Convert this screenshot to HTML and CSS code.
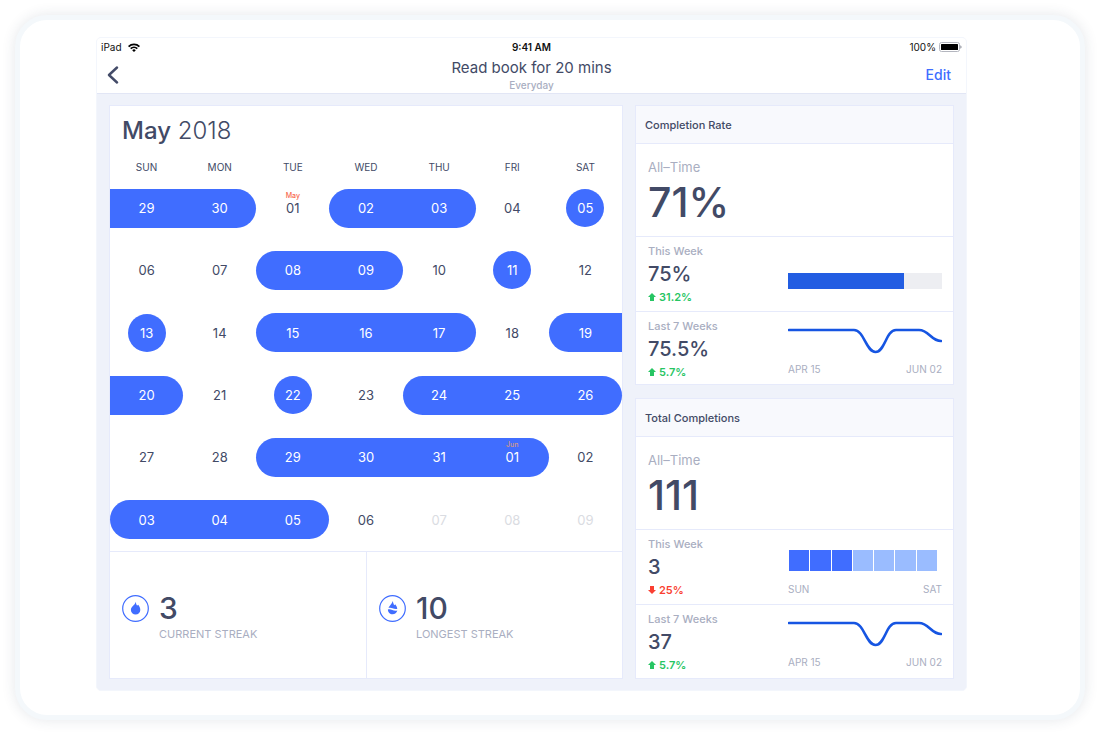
FILE: index.html
```html
<!DOCTYPE html>
<html lang="en">
<head>
<meta charset="utf-8">
<meta name="viewport" content="width=device-width, initial-scale=1">
<title>Read book for 20 mins</title>
<link rel="stylesheet" href="styles.css">
</head>
<body>
<div class="device">
  <div class="screen">
    <header class="topbar">
      <div class="status">
        <div class="status-left">
          <span>iPad</span>
          <svg class="wifi" viewBox="0 0 12 9" width="12" height="9" aria-hidden="true"><path d="M0 3A8.6 8.6 0 0 1 12 3L10.8 4.2A6.9 6.9 0 0 0 1.2 4.2ZM2.1 5.1A5.6 5.6 0 0 1 9.900 5.100L8.700 6.300A3.900 3.900 0 0 0 3.300 6.300ZM4.200 7.200A2.600 2.600 0 0 1 7.800 7.200L6 9Z"/></svg>
        </div>
        <span class="clock">9:41 AM</span>
        <div class="status-right">
          <span>100%</span>
          <svg viewBox="0 0 23 10" width="23" height="10" aria-hidden="true"><rect x=".5" y=".5" width="20" height="9" rx="2" fill="#fff" stroke="#b4b6bf"/><rect x="2" y="2" width="17" height="6" rx=".5"/><path d="M21.300 3.300Q22.600 4 22.600 5T21.300 6.700Z" fill="#8d909c"/></svg>
        </div>
      </div>
      <div class="nav">
        <button class="back" type="button" aria-label="Back"><svg viewBox="0 0 12 18" width="12" height="18" aria-hidden="true"><path d="M10 1.500 2 9l8 7.500" fill="none" stroke="#434b68" stroke-width="2.400" stroke-linecap="round" stroke-linejoin="round"/></svg></button>
        <div class="heading">
          <h1>Read book for 20 mins</h1>
          <p>Everyday</p>
        </div>
        <button class="edit" type="button">Edit</button>
      </div>
    </header>
    <main class="content">
      <section class="panel calendar">
        <h2 class="month"><strong>May</strong> 2018</h2>
        <table class="days">
          <thead><tr><th scope="col">SUN</th><th scope="col">MON</th><th scope="col">TUE</th><th scope="col">WED</th><th scope="col">THU</th><th scope="col">FRI</th><th scope="col">SAT</th></tr></thead>
          <tbody>
            <tr><td><span class="run">29</span></td><td><span class="run end">30</span></td><td><span class="day">01<small>May</small></span></td><td><span class="run start">02</span></td><td><span class="run end">03</span></td><td><span class="day">04</span></td><td><span class="dot">05</span></td></tr>
            <tr><td><span class="day">06</span></td><td><span class="day">07</span></td><td><span class="run start">08</span></td><td><span class="run end">09</span></td><td><span class="day">10</span></td><td><span class="dot">11</span></td><td><span class="day">12</span></td></tr>
            <tr><td><span class="dot">13</span></td><td><span class="day">14</span></td><td><span class="run start">15</span></td><td><span class="run">16</span></td><td><span class="run end">17</span></td><td><span class="day">18</span></td><td><span class="run start">19</span></td></tr>
            <tr><td><span class="run end">20</span></td><td><span class="day">21</span></td><td><span class="dot">22</span></td><td><span class="day">23</span></td><td><span class="run start">24</span></td><td><span class="run">25</span></td><td><span class="run end">26</span></td></tr>
            <tr><td><span class="day">27</span></td><td><span class="day">28</span></td><td><span class="run start">29</span></td><td><span class="run">30</span></td><td><span class="run">31</span></td><td><span class="run end">01<small>Jun</small></span></td><td><span class="day">02</span></td></tr>
            <tr><td><span class="run start">03</span></td><td><span class="run">04</span></td><td><span class="run end">05</span></td><td><span class="day">06</span></td><td><span class="day future">07</span></td><td><span class="day future">08</span></td><td><span class="day future">09</span></td></tr>
          </tbody>
        </table>
        <div class="streaks">
          <div class="streak">
            <svg viewBox="0 0 27 27" width="27" height="27" aria-hidden="true"><circle cx="13.500" cy="13.500" r="12.800" fill="#fff" stroke="#406dff" stroke-width="1.200"/><path d="M13.800 6.800c.2 1.700.6 2.700 1.200 3.800.6-.1.900-.4 1.200-.9 1.300 1.600 2.100 3.300 2.100 5.200a4.700 4.700 0 0 1-9.400 0c0-3.200 3.900-4.400 4.900-8.100z" fill="#406dff"/></svg>
            <div><p class="streak-value">3</p><p class="streak-label">CURRENT STREAK</p></div>
          </div>
          <div class="streak">
            <svg viewBox="0 0 27 27" width="27" height="27" aria-hidden="true"><circle cx="13.500" cy="13.500" r="12.800" fill="#fff" stroke="#406dff" stroke-width="1.200"/><path d="M13.800 6c.3 1.900.8 3 1.400 4.200.5-.2.800-.5 1-1 1.200 1.500 2 3 2.100 4.600-1.800.6-3.300-.1-4.800-.6-1.500-.5-2.700-.7-4-.2.600-2.300 3.200-3.500 4.300-7z" fill="#406dff"/><path d="M8.900 14.500c1.600-.6 2.900-.1 4.400.4 1.600.6 3.200 1 5 .5-.5 2.300-2.400 3.900-4.800 3.900-2.500 0-4.600-2.100-4.600-4.800z" fill="#406dff"/></svg>
            <div><p class="streak-value">10</p><p class="streak-label">LONGEST STREAK</p></div>
          </div>
        </div>
      </section>
      <div class="side">
        <section class="panel">
          <h2 class="panel-title">Completion Rate</h2>
          <div class="total"><p class="total-label">All–Time</p><p class="total-value">71%</p></div>
          <div class="metric">
            <div><p class="metric-label">This Week</p><p class="metric-value">75%</p><p class="delta up"><svg viewBox="0 0 8 8" width="8" height="8" aria-hidden="true"><path d="M4 0 8 4H6v4H2V4H0Z"/></svg>31.2%</p></div>
            <div class="chart chart-bar"><div class="bar"><div class="bar-fill" style="width:75%"></div></div></div>
          </div>
          <div class="metric last">
            <div><p class="metric-label">Last 7 Weeks</p><p class="metric-value">75.5%</p><p class="delta up"><svg viewBox="0 0 8 8" width="8" height="8" aria-hidden="true"><path d="M4 0 8 4H6v4H2V4H0Z"/></svg>5.7%</p></div>
            <div class="chart"><svg class="line" viewBox="0 0 154 26" aria-hidden="true"><path d="M1 2H66C76 2 78 24 87.500 24S98 2 108 2H131C141 2 143 13 153 13"/></svg><div class="axis"><span>APR 15</span><span>JUN 02</span></div></div>
          </div>
        </section>
        <section class="panel">
          <h2 class="panel-title">Total Completions</h2>
          <div class="total"><p class="total-label">All–Time</p><p class="total-value">111</p></div>
          <div class="metric">
            <div><p class="metric-label">This Week</p><p class="metric-value">3</p><p class="delta down"><svg viewBox="0 0 8 8" width="8" height="8" aria-hidden="true"><path d="M4 8 0 4H2V0H6V4H8Z"/></svg>25%</p></div>
            <div class="chart"><div class="week"><i class="on"></i><i class="on"></i><i class="on"></i><i></i><i></i><i></i><i></i></div><div class="axis"><span>SUN</span><span>SAT</span></div></div>
          </div>
          <div class="metric last">
            <div><p class="metric-label">Last 7 Weeks</p><p class="metric-value">37</p><p class="delta up"><svg viewBox="0 0 8 8" width="8" height="8" aria-hidden="true"><path d="M4 0 8 4H6v4H2V4H0Z"/></svg>5.7%</p></div>
            <div class="chart"><svg class="line" viewBox="0 0 154 26" aria-hidden="true"><path d="M1 2H66C76 2 78 24 87.500 24S98 2 108 2H131C141 2 143 13 153 13"/></svg><div class="axis"><span>APR 15</span><span>JUN 02</span></div></div>
          </div>
        </section>
      </div>
    </main>
  </div>
</div>
</body>
</html>
```
FILE: styles.css
```css
* { box-sizing: border-box; }
body {
  margin: 0;
  min-height: 100vh;
  padding: 15px 15px 16px;
  display: flex;
  background: #fff;
  color: #424a66;
  font-family: Inter, "Liberation Sans", sans-serif;
}
h1, h2, p { margin: 0; font-weight: 400; }
button { border: 0; padding: 0; background: none; font: inherit; }

.device {
  flex: 1;
  display: flex;
  padding: 17px 113px 24px 76px;
  border: 5px solid #f4f8fb;
  border-radius: 32px;
  background: #fff;
  box-shadow: 0 0 14px rgba(40, 60, 80, .12);
}
.screen {
  flex: 1;
  display: flex;
  flex-direction: column;
  border: 1px solid #f3f6fc;
  border-radius: 5px;
  background: #eff2fa;
}

.topbar { background: #fff; border-bottom: 1px solid #e2e6f5; border-radius: 4px 4px 0 0; }
.status {
  display: grid;
  grid-template-columns: 1fr auto 1fr;
  align-items: center;
  height: 18px;
  padding: 0 4px;
  font-size: 10px;
  color: #111;
}
.status-left { display: flex; align-items: center; gap: 6px; }
.status-right { display: flex; align-items: center; justify-content: flex-end; gap: 3px; }
.clock { font-weight: 600; }
.nav {
  display: grid;
  grid-template-columns: 1fr auto 1fr;
  align-items: center;
  height: 37px;
  padding: 0 10px;
}
.back { justify-self: start; display: flex; }
.edit { justify-self: end; padding-right: 5px; font-size: 14px; font-weight: 500; line-height: 20px; color: #406dff; }
.heading { text-align: center; }
.heading h1 { font-size: 15px; font-weight: 400; line-height: 20px; }
.heading p { font-size: 10px; font-weight: 500; line-height: 14px; color: #a9aec1; }

.content {
  flex: 1;
  display: grid;
  grid-template-columns: 514fr 319fr;
  gap: 12px;
  padding: 11px 12px;
}
.panel { background: #fff; border: 1px solid #e6eafb; }

.calendar { display: flex; flex-direction: column; }
.month { padding: 9px 12px 0; font-size: 24px; font-weight: 300; line-height: 32px; }
.month strong { font-weight: 500; }
.days {
  width: 100%;
  flex: 1;
  height: 404px;
  border-collapse: collapse;
  table-layout: fixed;
  text-align: center;
}
.days th { height: 30px; padding: 10px 0 0; font-size: 10px; font-weight: 400; line-height: 20px; vertical-align: top; }
.days td { padding: 0; font-size: 13px; }
.day, .run, .dot { display: flex; align-items: center; justify-content: center; position: relative; height: 39px; }
.run, .dot { background: #406dff; color: #fff; }
.start { border-top-left-radius: 20px; border-bottom-left-radius: 20px; }
.end { border-top-right-radius: 20px; border-bottom-right-radius: 20px; }
.dot { width: 38px; height: 38px; margin: 0 auto; border-radius: 50%; }
.future { color: #dadce2; }
.days small { position: absolute; top: 2px; left: 0; right: 0; font-size: 7px; font-weight: 500; line-height: 10px; color: #f8694d; }
.run small { color: #d39a85; }

.streaks { display: grid; grid-template-columns: 1fr 1fr; border-top: 1px solid #e6eafb; }
.streak { display: flex; gap: 10px; padding: 38px 12px 36px; }
.streak + .streak { border-left: 1px solid #e6eafb; }
.streak svg { margin-top: 5px; }
.streak-value { font-size: 30px; font-weight: 500; line-height: 36px; }
.streak-label { font-size: 11px; line-height: 16px; color: #a9aec1; }

.side { display: grid; grid-template-rows: auto 1fr; gap: 13px; }
.panel-title {
  height: 38px;
  padding: 0 9px;
  background: #f8f9fd;
  border-bottom: 1px solid #e6eafb;
  font-size: 11px;
  font-weight: 500;
  line-height: 38px;
}
.total { padding: 14px 12px 8px; border-bottom: 1px solid #e6eafb; }
.total-label { font-size: 13px; font-weight: 400; line-height: 18px; color: #a9aec1; }
.total-value { font-size: 41px; font-weight: 500; line-height: 52px; }
.metric {
  display: grid;
  grid-template-columns: 1fr 154px;
  height: 75px;
  padding: 0 11px 0 12px;
  border-bottom: 1px solid #e6eafb;
}
.metric.last { height: 72px; border-bottom: 0; }
.metric-label { padding-top: 6px; font-size: 11px; font-weight: 500; line-height: 16px; color: #a9aec1; }
.metric-value { font-size: 20px; font-weight: 500; line-height: 30px; }
.delta { display: flex; align-items: center; gap: 3px; font-size: 11px; font-weight: 600; line-height: 16px; }
.up { color: #27c563; }
.down { color: #fa3f32; }
.delta svg { fill: currentColor; }
.chart { display: flex; flex-direction: column; justify-content: space-between; padding: 16px 0 8px; }
.chart-bar { justify-content: center; padding: 14px 0 0; }
.bar { height: 16px; background: #edeef2; }
.bar-fill { height: 16px; background: #225de2; }
.line { width: 100%; height: 26px; fill: none; stroke: #1655e2; stroke-width: 2.600; stroke-linecap: round; }
.week { display: grid; grid-template-columns: repeat(7, 1fr); gap: 1px; height: 21px; margin: 4px 5px 0 1px; }
.week i { background: #9abcff; }
.week .on { background: #406dff; }
.axis { display: flex; justify-content: space-between; font-size: 10px; line-height: 14px; color: #a9aec1; }
```
